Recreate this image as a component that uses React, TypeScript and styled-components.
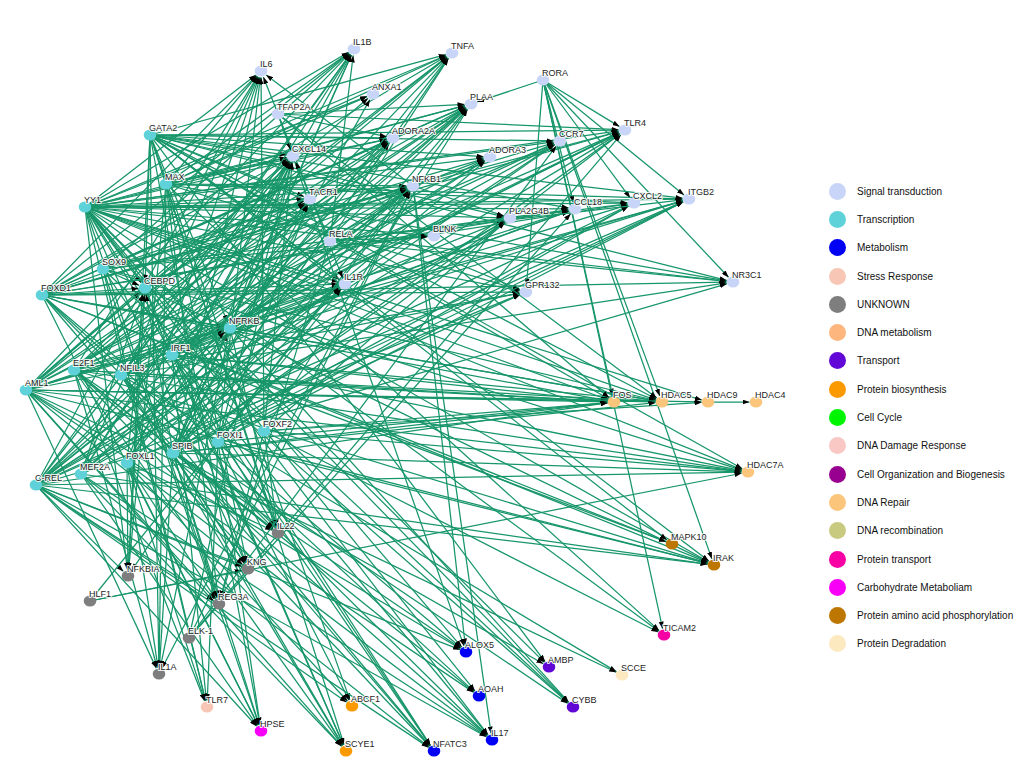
import React from "react";
import styled, { createGlobalStyle } from "styled-components";

const GlobalStyle = createGlobalStyle`
  html, body {
    margin: 0;
    padding: 0;
    background: #ffffff;
    font-family: "Liberation Sans", Arial, sans-serif;
  }
`;

const Page = styled.div`
  display: flex;
  width: 1035px;
  height: 765px;
  background: #ffffff;
  overflow: hidden;
`;

const GraphCanvas = styled.svg`
  flex: 0 0 829px;
  width: 829px;
  height: 765px;
  display: block;
`;

const Edge = styled.line`
  stroke: #17966a;
  stroke-width: 1.25;
`;

const NodeDot = styled.ellipse<{ $color: string }>`
  fill: ${(p) => p.$color};
`;

const NodeLabel = styled.text`
  font-family: "Liberation Sans", Arial, sans-serif;
  font-size: 9px;
  fill: #1e1e1e;
  paint-order: stroke;
  stroke: #ffffff;
  stroke-width: 2.2px;
  stroke-opacity: 0.85;
  stroke-linejoin: round;
`;

const Legend = styled.ul`
  list-style: none;
  margin: 0;
  padding: 177px 0 0 0;
  display: flex;
  flex-direction: column;
`;

const LegendRow = styled.li`
  height: 28.3px;
  display: flex;
  align-items: center;
  gap: 11px;
`;

const Swatch = styled.span<{ $color: string }>`
  width: 17px;
  height: 17px;
  border-radius: 50%;
  background: ${(p) => p.$color};
  flex: 0 0 17px;
`;

const LegendLabel = styled.span`
  font-size: 10px;
  color: #111111;
  white-space: nowrap;
`;

const C = {
  signal: "#c9d5f8",
  tf: "#5ed2d8",
  metab: "#0000f4",
  stress: "#f8c6b4",
  unknown: "#7e7e7e",
  dnaMetab: "#fdb67e",
  transport: "#6208d6",
  biosyn: "#fb9a00",
  cycle: "#00f600",
  damage: "#f9c8c4",
  org: "#98008f",
  repair: "#fbc67c",
  recomb: "#c8ca80",
  ptrans: "#f700a4",
  carb: "#f800f8",
  phos: "#bd7600",
  degr: "#fde9bf",
};

const legendItems: [string, string][] = [
  ["Signal transduction", C.signal],
  ["Transcription", C.tf],
  ["Metabolism", C.metab],
  ["Stress Response", C.stress],
  ["UNKNOWN", C.unknown],
  ["DNA metabolism", C.dnaMetab],
  ["Transport", C.transport],
  ["Protein biosynthesis", C.biosyn],
  ["Cell Cycle", C.cycle],
  ["DNA Damage Response", C.damage],
  ["Cell Organization and Biogenesis", C.org],
  ["DNA Repair", C.repair],
  ["DNA recombination", C.recomb],
  ["Protein transport", C.ptrans],
  ["Carbohydrate Metaboliam", C.carb],
  ["Protein amino acid phosphorylation", C.phos],
  ["Protein Degradation", C.degr],
];

type GeneNode = { id: string; x: number; y: number; color: string };

const nodes: GeneNode[] = [
  { id: "IL1B", x: 354, y: 49, color: C.signal },
  { id: "TNFA", x: 452, y: 53, color: C.signal },
  { id: "IL6", x: 261, y: 71, color: C.signal },
  { id: "ANXA1", x: 373, y: 94, color: C.signal },
  { id: "RORA", x: 543, y: 80, color: C.signal },
  { id: "PLAA", x: 471, y: 104, color: C.signal },
  { id: "TFAP2A", x: 278, y: 114, color: C.signal },
  { id: "TLR4", x: 625, y: 130, color: C.signal },
  { id: "ADORA2A", x: 393, y: 138, color: C.signal },
  { id: "CCR7", x: 560, y: 141, color: C.signal },
  { id: "CXCL14", x: 293, y: 156, color: C.signal },
  { id: "ADORA3", x: 490, y: 157, color: C.signal },
  { id: "NFKB1", x: 413, y: 186, color: C.signal },
  { id: "TACR1", x: 310, y: 199, color: C.signal },
  { id: "ITGB2", x: 689, y: 199, color: C.signal },
  { id: "CXCL2", x: 634, y: 203, color: C.signal },
  { id: "CCL18", x: 575, y: 209, color: C.signal },
  { id: "PLA2G4B", x: 510, y: 218, color: C.signal },
  { id: "BLNK", x: 434, y: 236, color: C.signal },
  { id: "RELA", x: 330, y: 241, color: C.signal },
  { id: "NR3C1", x: 733, y: 282, color: C.signal },
  { id: "IL1R", x: 345, y: 284, color: C.signal },
  { id: "GPR132", x: 526, y: 292, color: C.signal },
  { id: "GATA2", x: 150, y: 135, color: C.tf },
  { id: "MAX", x: 166, y: 184, color: C.tf },
  { id: "YY1", x: 85, y: 207, color: C.tf },
  { id: "SOX9", x: 103, y: 269, color: C.tf },
  { id: "CEBPD", x: 145, y: 288, color: C.tf },
  { id: "FOXD1", x: 42, y: 295, color: C.tf },
  { id: "NFRKB", x: 230, y: 328, color: C.tf },
  { id: "IRF1", x: 172, y: 355, color: C.tf },
  { id: "E2F1", x: 74, y: 370, color: C.tf },
  { id: "NFIL3", x: 121, y: 375, color: C.tf },
  { id: "AML1", x: 26, y: 390, color: C.tf },
  { id: "FOXF2", x: 264, y: 431, color: C.tf },
  { id: "FOXI1", x: 218, y: 442, color: C.tf },
  { id: "SPIB", x: 173, y: 453, color: C.tf },
  { id: "FOXL1", x: 127, y: 463, color: C.tf },
  { id: "MEF2A", x: 81, y: 474, color: C.tf },
  { id: "C-REL", x: 36, y: 485, color: C.tf },
  { id: "IL22", x: 278, y: 533, color: C.unknown },
  { id: "KNG", x: 248, y: 569, color: C.unknown },
  { id: "NFKBIA", x: 128, y: 576, color: C.unknown },
  { id: "HLF1", x: 90, y: 601, color: C.unknown },
  { id: "REG3A", x: 219, y: 604, color: C.unknown },
  { id: "ELK-1", x: 189, y: 638, color: C.unknown },
  { id: "IL1A", x: 159, y: 674, color: C.unknown },
  { id: "TLR7", x: 207, y: 707, color: C.stress },
  { id: "HPSE", x: 261, y: 731, color: C.carb },
  { id: "ABCF1", x: 352, y: 706, color: C.biosyn },
  { id: "SCYE1", x: 346, y: 751, color: C.biosyn },
  { id: "ALOX5", x: 466, y: 652, color: C.metab },
  { id: "AOAH", x: 479, y: 696, color: C.metab },
  { id: "IL17", x: 492, y: 740, color: C.metab },
  { id: "NFATC3", x: 434, y: 751, color: C.metab },
  { id: "AMBP", x: 549, y: 667, color: C.transport },
  { id: "CYBB", x: 573, y: 707, color: C.transport },
  { id: "SCCE", x: 622, y: 675, color: C.degr },
  { id: "TICAM2", x: 664, y: 635, color: C.ptrans },
  { id: "FOS", x: 614, y: 402, color: C.repair },
  { id: "HDAC5", x: 662, y: 402, color: C.repair },
  { id: "HDAC9", x: 708, y: 402, color: C.repair },
  { id: "HDAC4", x: 756, y: 402, color: C.repair },
  { id: "HDAC7A", x: 748, y: 472, color: C.repair },
  { id: "MAPK10", x: 672, y: 544, color: C.phos },
  { id: "IRAK", x: 714, y: 565, color: C.phos },
];

const byId: Record<string, GeneNode> = Object.fromEntries(nodes.map((n) => [n.id, n]));

// how often each gene is hit as a target
const targetWeights: Record<string, number> = {
  IL1B: 3, TNFA: 2, ANXA1: 1.5, PLAA: 3, TLR4: 3, ADORA2A: 3, CCR7: 2,
  ADORA3: 2, NFKB1: 2.5, CXCL2: 3, ITGB2: 2.5, CCL18: 2, PLA2G4B: 2,
  BLNK: 1, IL1R: 3, GPR132: 2, NR3C1: 1.5, IL6: 2.5, CXCL14: 3, TACR1: 1.5,
  CEBPD: 2.5, NFRKB: 2, IL22: 2, NFKBIA: 1.5, KNG: 2, REG3A: 1.5, IL1A: 2,
  TLR7: 1.2, HPSE: 1.5, ABCF1: 1.5, SCYE1: 1.3, ALOX5: 1.5, AOAH: 2, IL17: 2,
  NFATC3: 2, AMBP: 1.3, CYBB: 1.3, SCCE: 0.5, TICAM2: 0.7, FOS: 2.5,
  HDAC5: 1.5, HDAC9: 0.8, HDAC4: 0.2, HDAC7A: 2, MAPK10: 1.5, IRAK: 2,
};

const sourceDegrees: [string, number][] = [
  ["YY1", 38], ["GATA2", 26], ["MAX", 18], ["SOX9", 14], ["FOXD1", 26],
  ["CEBPD", 8], ["NFRKB", 10], ["IRF1", 18], ["E2F1", 22], ["NFIL3", 16],
  ["AML1", 26], ["FOXF2", 10], ["FOXI1", 14], ["SPIB", 28], ["FOXL1", 16],
  ["MEF2A", 14], ["C-REL", 26], ["TFAP2A", 9], ["RELA", 9], ["NFKB1", 7],
  ["HLF1", 3], ["ELK-1", 5],
];

const fixedEdges: [string, string][] = [
  ["RORA", "PLAA"], ["RORA", "TLR4"], ["RORA", "CXCL2"], ["RORA", "ITGB2"],
  ["RORA", "NR3C1"], ["RORA", "GPR132"], ["RORA", "HDAC5"], ["RORA", "IRAK"],
  ["RORA", "TICAM2"], ["RORA", "FOS"], ["RORA", "CCL18"], ["HDAC9", "HDAC4"],
];

function mulberry32(seed: number) {
  return () => {
    seed |= 0;
    seed = (seed + 0x6d2b79f5) | 0;
    let t = Math.imul(seed ^ (seed >>> 15), 1 | seed);
    t = (t + Math.imul(t ^ (t >>> 7), 61 | t)) ^ t;
    return ((t ^ (t >>> 14)) >>> 0) / 4294967296;
  };
}

function buildEdges(): [string, string][] {
  const rand = mulberry32(20240611);
  const out: [string, string][] = [...fixedEdges];
  const targets = Object.keys(targetWeights);
  for (const [src, deg] of sourceDegrees) {
    const picked = new Set<string>();
    let guard = 0;
    while (picked.size < deg && guard < 2000) {
      guard++;
      const pool = targets.filter((t) => t !== src && !picked.has(t));
      const total = pool.reduce((s, t) => s + targetWeights[t], 0);
      let r = rand() * total;
      let choice = pool[0];
      for (const t of pool) {
        r -= targetWeights[t];
        if (r <= 0) {
          choice = t;
          break;
        }
      }
      picked.add(choice);
    }
    picked.forEach((t) => out.push([src, t]));
  }
  return out;
}

const edges = buildEdges();

const App: React.FC = () => {
  return (
    <>
      <GlobalStyle />
      <Page>
        <GraphCanvas viewBox="0 0 829 765">
          <defs>
            <marker
              id="arrow"
              viewBox="0 0 7 5"
              refX="7"
              refY="2.5"
              markerWidth="7"
              markerHeight="5"
              markerUnits="userSpaceOnUse"
              orient="auto"
            >
              <path d="M0,0 L7,2.5 L0,5 z" fill="#000000" />
            </marker>
          </defs>
          {edges.map(([s, t], i) => {
            const a = byId[s];
            const b = byId[t];
            const dx = b.x - a.x;
            const dy = b.y - a.y;
            const len = Math.hypot(dx, dy) || 1;
            const cut = 6.5;
            return (
              <Edge
                key={i}
                x1={a.x}
                y1={a.y}
                x2={b.x - (dx / len) * cut}
                y2={b.y - (dy / len) * cut}
                markerEnd="url(#arrow)"
              />
            );
          })}
          {nodes.map((n) => (
            <NodeDot key={n.id} cx={n.x} cy={n.y} rx={6.3} ry={5.6} $color={n.color} />
          ))}
          {nodes.map((n) => (
            <NodeLabel key={n.id} x={n.x - 1} y={n.y - 4.5}>
              {n.id}
            </NodeLabel>
          ))}
        </GraphCanvas>
        <Legend>
          {legendItems.map(([label, color]) => (
            <LegendRow key={label}>
              <Swatch $color={color} />
              <LegendLabel>{label}</LegendLabel>
            </LegendRow>
          ))}
        </Legend>
      </Page>
    </>
  );
};

export default App;
